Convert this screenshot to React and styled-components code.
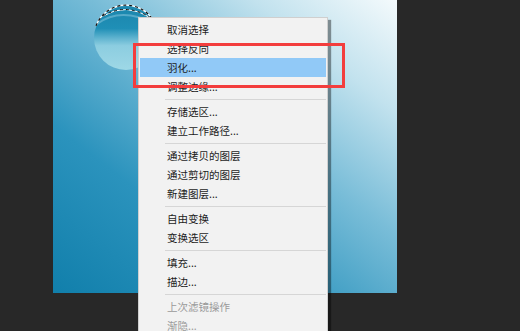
import React from 'react';
import styled, { createGlobalStyle } from 'styled-components';

const GlobalStyle = createGlobalStyle`
    html, body {
        margin: 0;
        padding: 0;
        background: #282828;
    }
`;

const groups = [
    [
        { label: '取消选择' },
        { label: '选择反向' },
        { label: '羽化...', active: true },
        { label: '调整边缘...' },
    ],
    [{ label: '存储选区...' }, { label: '建立工作路径...' }],
    [{ label: '通过拷贝的图层' }, { label: '通过剪切的图层' }, { label: '新建图层...' }],
    [{ label: '自由变换' }, { label: '变换选区' }],
    [{ label: '填充...' }, { label: '描边...' }],
    [
        { label: '上次滤镜操作', disabled: true },
        { label: '渐隐...', disabled: true },
    ],
];

const Selection = () => (
    <Marquee width="70" height="72" viewBox="0 0 70 72">
        <defs>
            <linearGradient id="ball" x1="0" y1="0" x2="0" y2="1">
                <stop offset="0" stopColor="#1b86ad" />
                <stop offset="0.35" stopColor="#1f8fb6" />
                <stop offset="0.5" stopColor="#5fb3cf" />
                <stop offset="0.62" stopColor="#8ccde0" />
                <stop offset="1" stopColor="#9ed8e6" />
            </linearGradient>
        </defs>
        <circle cx="35" cy="36" r="32" fill="url(#ball)" />
        <path d="M6 22 Q30 4 64 22" fill="none" stroke="#7cc0d8" strokeWidth="2" opacity="0.6" />
        <path d="M5 24 A32 32 0 0 1 65 24" fill="none" stroke="#fff" strokeWidth="1.2" />
        <path d="M5 24 A32 32 0 0 1 65 24" fill="none" stroke="#111" strokeWidth="1.2" strokeDasharray="3 3" />
        <path d="M12 14 Q35 0 60 16" fill="none" stroke="#fff" strokeWidth="1" />
        <path d="M12 14 Q35 0 60 16" fill="none" stroke="#111" strokeWidth="1" strokeDasharray="3 3" />
    </Marquee>
);

const App = () => (
    <>
        <GlobalStyle />
        <Stage>
            <Canvas>
                <Selection />
            </Canvas>
            <Menu>
                {groups.map((group, gi) => (
                    <React.Fragment key={gi}>
                        {gi > 0 && <Separator />}
                        {group.map(item => (
                            <Item key={item.label} $active={item.active} $disabled={item.disabled}>
                                {item.label}
                            </Item>
                        ))}
                    </React.Fragment>
                ))}
            </Menu>
            <Callout />
        </Stage>
    </>
);

const Stage = styled.div`
    position: relative;
    width: 520px;
    height: 331px;
    overflow: hidden;
    background: #282828;
    padding-left: 53px;
    box-sizing: border-box;
`;

const Canvas = styled.div`
    position: relative;
    width: 344px;
    height: 293px;
    background: linear-gradient(
        38deg,
        #117fab 0%,
        #2b93bd 30%,
        #79bdd8 58%,
        #c2e2ee 80%,
        #f4fafc 100%
    );
`;

const Marquee = styled.svg`
    position: absolute;
    left: 38px;
    top: 2px;
`;

const Menu = styled.div`
    position: absolute;
    left: 138px;
    top: 17px;
    width: 190px;
    box-sizing: border-box;
    padding: 2px 1px;
    background: #f2f2f2;
    border: 1px solid #cfcfcf;
    box-shadow: 3px 3px 1px rgba(0, 0, 0, 0.4);
    font-family: 'Noto Sans CJK SC', 'Noto Sans', sans-serif;
`;

const Item = styled.div`
    height: 19px;
    line-height: 19px;
    padding-left: 27px;
    font-size: 10.5px;
    color: ${p => (p.$disabled ? '#9a9a9a' : '#1c1c1c')};
    background: ${p => (p.$active ? '#91c9f7' : 'transparent')};
    white-space: nowrap;
`;

const Separator = styled.div`
    height: 1px;
    margin: 3px 0 2px 25px;
    background: #d6d6d6;
`;

const Callout = styled.div`
    position: absolute;
    left: 133px;
    top: 43px;
    width: 212px;
    height: 45px;
    box-sizing: border-box;
    border: 3px solid #f33d3d;
`;

export default App;
